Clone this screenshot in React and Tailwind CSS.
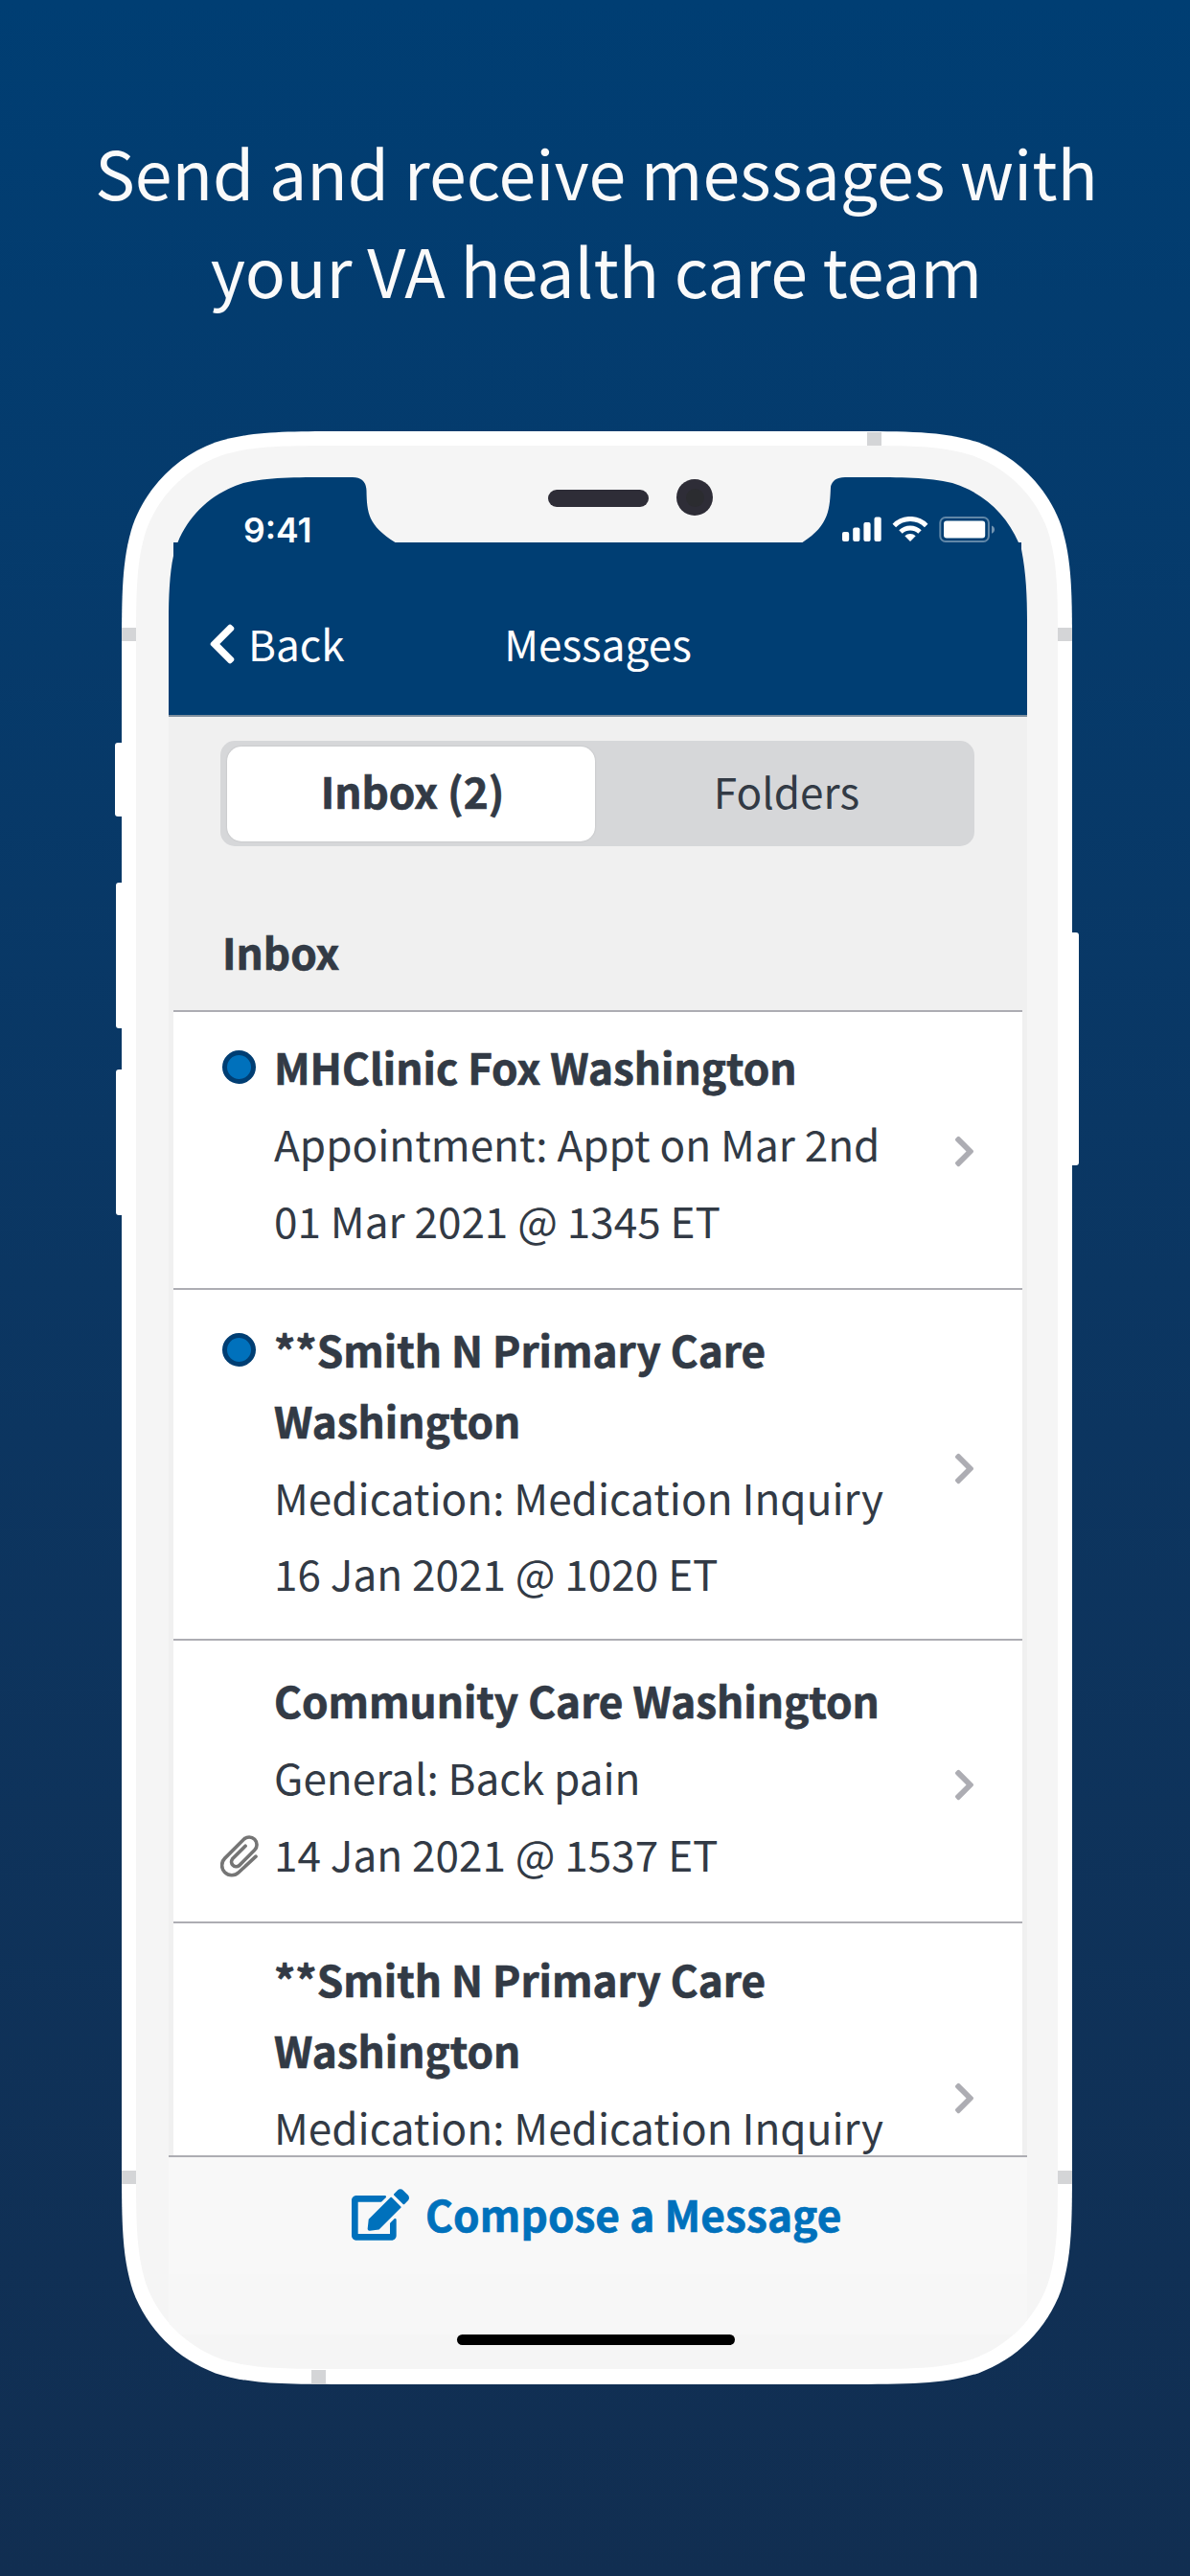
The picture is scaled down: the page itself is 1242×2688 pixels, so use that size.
import React from "react";
import { FaChevronLeft, FaChevronRight, FaEdit } from "react-icons/fa";

const messages = [
  {
    sender: ["MHClinic Fox Washington"],
    subject: "Appointment: Appt on Mar 2nd",
    date: "01 Mar 2021 @ 1345 ET",
    unread: true,
    row: "h-[290px] pt-[20px] border-b-2",
    chevron: "mt-[107px]",
  },
  {
    sender: ["**Smith N Primary Care", "Washington"],
    subject: "Medication: Medication Inquiry",
    date: "16 Jan 2021 @ 1020 ET",
    unread: true,
    row: "h-[366px] pt-[25px] border-b-2",
    dateGap: "mt-[5px]",
    chevron: "mt-[143px]",
  },
  {
    sender: ["Community Care Washington"],
    subject: "General: Back pain",
    date: "14 Jan 2021 @ 1537 ET",
    attachment: true,
    row: "h-[295px] pt-[25px] border-b-2",
    chevron: "mt-[107px]",
  },
  {
    sender: ["**Smith N Primary Care", "Washington"],
    subject: "Medication: Medication Inquiry",
    row: "h-[242px] pt-[21px]",
    chevron: "mt-[143px]",
  },
];

function StatusIcons() {
  return (
    <svg width="160" height="27" viewBox="0 0 160 27" fill="#fff">
      <rect x="0" y="16" width="7.2" height="10" rx="2" />
      <rect x="11.2" y="11.6" width="7.2" height="14.4" rx="2" />
      <rect x="22.4" y="6" width="7.2" height="20" rx="2" />
      <rect x="33.5" y="0.5" width="7.2" height="25.5" rx="2" />
      <g fill="none" stroke="#fff" strokeWidth="5">
        <path d="M54.3 9.4a23.5 23.5 0 0 1 33.4 0" />
        <path d="M61 16a14.5 14.5 0 0 1 20 0" />
      </g>
      <path d="M71 26l-5.7-5.8a8.4 8.4 0 0 1 11.4 0z" />
      <rect x="102.3" y="1" width="50.6" height="25" rx="5.5" fill="none" stroke="#fff" strokeOpacity=".38" strokeWidth="2" />
      <rect x="106" y="4.6" width="43.2" height="17.8" rx="3" />
      <path d="M156 9.5c4 1.2 4 7 0 8.2z" fillOpacity=".45" />
    </svg>
  );
}

function Paperclip({ className }) {
  return (
    <svg className={className} viewBox="27 44 121 133" fill="none" stroke="currentColor" strokeWidth="11" strokeLinecap="round">
      <path d="M139 111L85 161A31 31 0 0 1 41 117L101 57A24 24 0 0 1 135 91L86 140A15 15 0 0 1 65 119L106 78" />
    </svg>
  );
}

function MessageRow({ sender, subject, date, unread, attachment, row, chevron, dateGap = "mt-[6px]" }) {
  return (
    <li className={`flex items-start border-[#adadb3] bg-white pl-[48px] ${row}`}>
      <div className="w-[57px] shrink-0">
        {unread && (
          <div className="mt-[20px] ml-[3px] size-[35px] rounded-full border-[5px] border-[#003e73] bg-[#0071bc]" />
        )}
        {attachment && <Paperclip className="mt-[178px] ml-px h-[44px] w-[40px] text-[#757575]" />}
      </div>
      <div className="w-[709px] whitespace-nowrap">
        {sender.map((line) => (
          <p key={line} className="leading-[74px] font-bold [-webkit-text-stroke:0.7px]">{line}</p>
        ))}
        <p className="mt-[6px] leading-[74px]">{subject}</p>
        {date && <p className={`leading-[74px] ${dateGap}`}>{date}</p>}
      </div>
      <FaChevronRight className={`h-[37px] w-[23px] shrink-0 text-[#adadb3] ${chevron}`} />
    </li>
  );
}

export default function App() {
  return (
    <main className="flex h-[2688px] w-[1242px] flex-col items-center overflow-hidden bg-linear-to-b from-[#003e73] to-[#112e51] font-['Noto_Sans_CJK_SC',sans-serif] text-[44.1px] text-[#323a45]">
      <h1 className="mt-[128px] h-[322px] w-full pl-[3px] text-center text-[69.8px] leading-[102px] whitespace-nowrap text-[#fafafa]">
        Send and receive messages with
        <br />
        your VA health care team
      </h1>

      <div className="relative ml-[4px] h-[2038px] w-[992px]">
        {/* Side buttons */}
        <div className="absolute top-[325px] -left-[7px] h-[77px] w-[20px] rounded-[3px] bg-white" />
        <div className="absolute top-[471px] -left-[6px] h-[152px] w-[20px] rounded-[3px] bg-white" />
        <div className="absolute top-[666px] -left-[6px] h-[152px] w-[20px] rounded-[3px] bg-white" />
        <div className="absolute top-[523px] -right-[7px] h-[243px] w-[20px] rounded-[3px] bg-white" />

        {/* Metal rim */}
        <div className="relative h-[2038px] w-[992px] bg-white p-[15px] [clip-path:path('M0_237C0_168.7_0_134.6_11.6_97.9C26.2_57.8_57.8_26.2_97.9_11.6C134.6_0_168.7_0_237_0H755C823.3_0_857.4_0_894.1_11.6C934.2_26.2_965.8_57.8_980.4_97.9C992_134.6_992_168.7_992_237V1801C992_1869.3_992_1903.4_980.4_1940.1C965.8_1980.2_934.2_2011.8_894.1_2026.4C857.4_2038_823.3_2038_755_2038H237C168.7_2038_134.6_2038_97.9_2026.4C57.8_2011.8_26.2_1980.2_11.6_1940.1C0_1903.4_0_1869.3_0_1801Z')]">
          <div className="absolute top-px left-[778px] h-[14px] w-[15px] bg-[#d4d5d7]" />
          <div className="absolute top-[2023px] left-[198px] h-[15px] w-[15px] bg-[#d4d5d7]" />
          <div className="absolute top-[205px] left-0 h-[14px] w-[15px] bg-[#d4d5d7]" />
          <div className="absolute top-[205px] right-0 h-[14px] w-[15px] bg-[#d4d5d7]" />
          <div className="absolute top-[1815px] left-0 h-[14px] w-[15px] bg-[#d4d5d7]" />
          <div className="absolute top-[1815px] right-0 h-[14px] w-[15px] bg-[#d4d5d7]" />

          {/* Bezel */}
          <div className="relative h-[2007px] w-[962px] bg-[#f5f5f5] pt-[33px] pl-[34px] [clip-path:path('M0_214C0_152.4_0_121.6_10.5_88.4C23.7_52.2_52.2_23.7_88.4_10.5C121.6_0_152.4_0_214_0H748C809.6_0_840.4_0_873.6_10.5C909.8_23.7_938.3_52.2_951.5_88.4C962_121.6_962_152.4_962_214V1793C962_1854.6_962_1885.4_951.5_1918.6C938.3_1954.8_909.8_1983.3_873.6_1996.5C840.4_2007_809.6_2007_748_2007H214C152.4_2007_121.6_2007_88.4_1996.5C52.2_1983.3_23.7_1954.8_10.5_1918.6C0_1885.4_0_1854.6_0_1793Z')]">
            {/* Screen */}
            <div className="w-[896px]">
              <header className="h-[250px] border-b-2 border-[#7f8f9d] bg-[#003e73] text-white [clip-path:path('M0_250V150C0_125_1_100_5_82V68H9.5C22_38_46_16_78_6C104_0_130_0_172_0H192Q206_0_206.500_14C207_37_208_50_236.500_68H661.500C690_50_690_32_691_10Q693_0_706_0H724C766_0_792_0_818_6C850_16_874_38_887_68H890V75C895_100_896_125_896_150V250Z')]">
                <div className="flex h-[68px] items-start justify-between pr-[33px] pl-[78px]">
                  <span className="mt-[40px] font-['Inter',sans-serif] text-[35.5px] leading-[32px] font-semibold">9:41</span>
                  <div className="mt-[41px]">
                    <StatusIcons />
                  </div>
                </div>
                <div className="grid h-[180px] grid-cols-[1fr_auto_1fr] items-start pt-[68px] leading-[74px]">
                  <div className="flex pl-[41px]">
                    <FaChevronLeft className="mt-[14px] h-[48px] w-[30px]" />
                    <span className="ml-[12px]">Back</span>
                  </div>
                  <span>Messages</span>
                </div>
              </header>

              <section className="h-[306px] bg-[#f0f0f0] pt-[25px] pr-[55px] pl-[54px]">
                <div className="flex h-[110px] rounded-[15px] bg-[#d6d7d9] px-[7px] py-[5.5px]">
                  <div className="w-[384px] rounded-[15px] bg-white pl-[3px] text-center leading-[93px] font-bold shadow-[0_0_2px_rgba(0,0,0,0.15)] [-webkit-text-stroke:0.7px]">
                    Inbox (2)
                  </div>
                  <div className="flex-1 pl-[11px] text-center leading-[93px]">Folders</div>
                </div>
                <h2 className="mt-[73px] ml-[2px] leading-[74px] font-bold [-webkit-text-stroke:0.7px]">Inbox</h2>
              </section>

              <ul className="h-[1195px] overflow-hidden border-x-[5px] border-[#f0f0f0] bg-[#adadb3] pt-[2px]">
                {messages.map((m, i) => (
                  <MessageRow key={i} {...m} />
                ))}
              </ul>

              <footer className="h-[187px] bg-[#f7f7f7]">
                <div className="flex h-[124px] border-t-2 border-[#adadb3] bg-[#f8f8f8] pt-[22px] pl-[191px] text-[#0071bc]">
                  <FaEdit className="mt-[11px] h-[54px] w-[60px]" />
                  <span className="ml-[17px] leading-[74px] font-bold tracking-[0.12px] [-webkit-text-stroke:0.7px]">Compose a Message</span>
                </div>
              </footer>
              <div className="ml-[301px] h-[11px] w-[290px] rounded-full bg-black" />
            </div>

            {/* Speaker and camera */}
            <div className="absolute top-[46px] left-[430px] h-[18px] w-[105px] rounded-full bg-[#2e2d37]" />
            <div className="absolute top-[35px] left-[564px] grid size-[38px] place-items-center rounded-full bg-[#2e2d37]">
              <div className="size-[19px] rounded-full bg-[#2b2c30]" />
            </div>
          </div>
        </div>
      </div>
    </main>
  );
}
